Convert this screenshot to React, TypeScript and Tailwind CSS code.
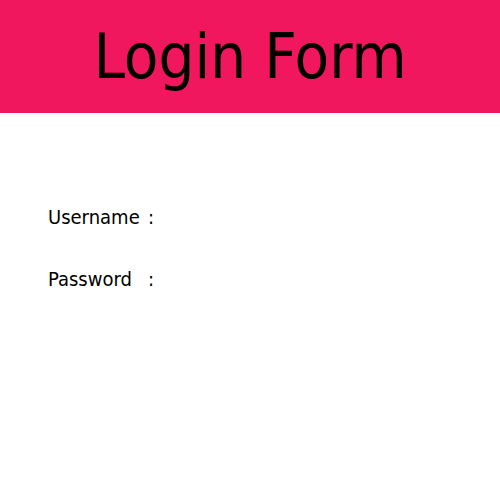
export default function App() {
  return (
    <div className="w-[500px] h-[500px] bg-white" style={{ fontFamily: '"DejaVu Sans Condensed", "DejaVu Sans", sans-serif' }}>
      <div className="h-[113px] bg-[#f0175e] flex items-center justify-center">
        <h1 className="text-[63px] leading-none text-black">Login Form</h1>
      </div>
      <div className="pl-12 pt-[92px] flex flex-col gap-[38px] text-[20px] leading-6 text-black">
        <div className="flex">
          <span className="w-[100px]">Username</span>
          <span>:</span>
        </div>
        <div className="flex">
          <span className="w-[100px]">Password</span>
          <span>:</span>
        </div>
      </div>
    </div>
  );
}
